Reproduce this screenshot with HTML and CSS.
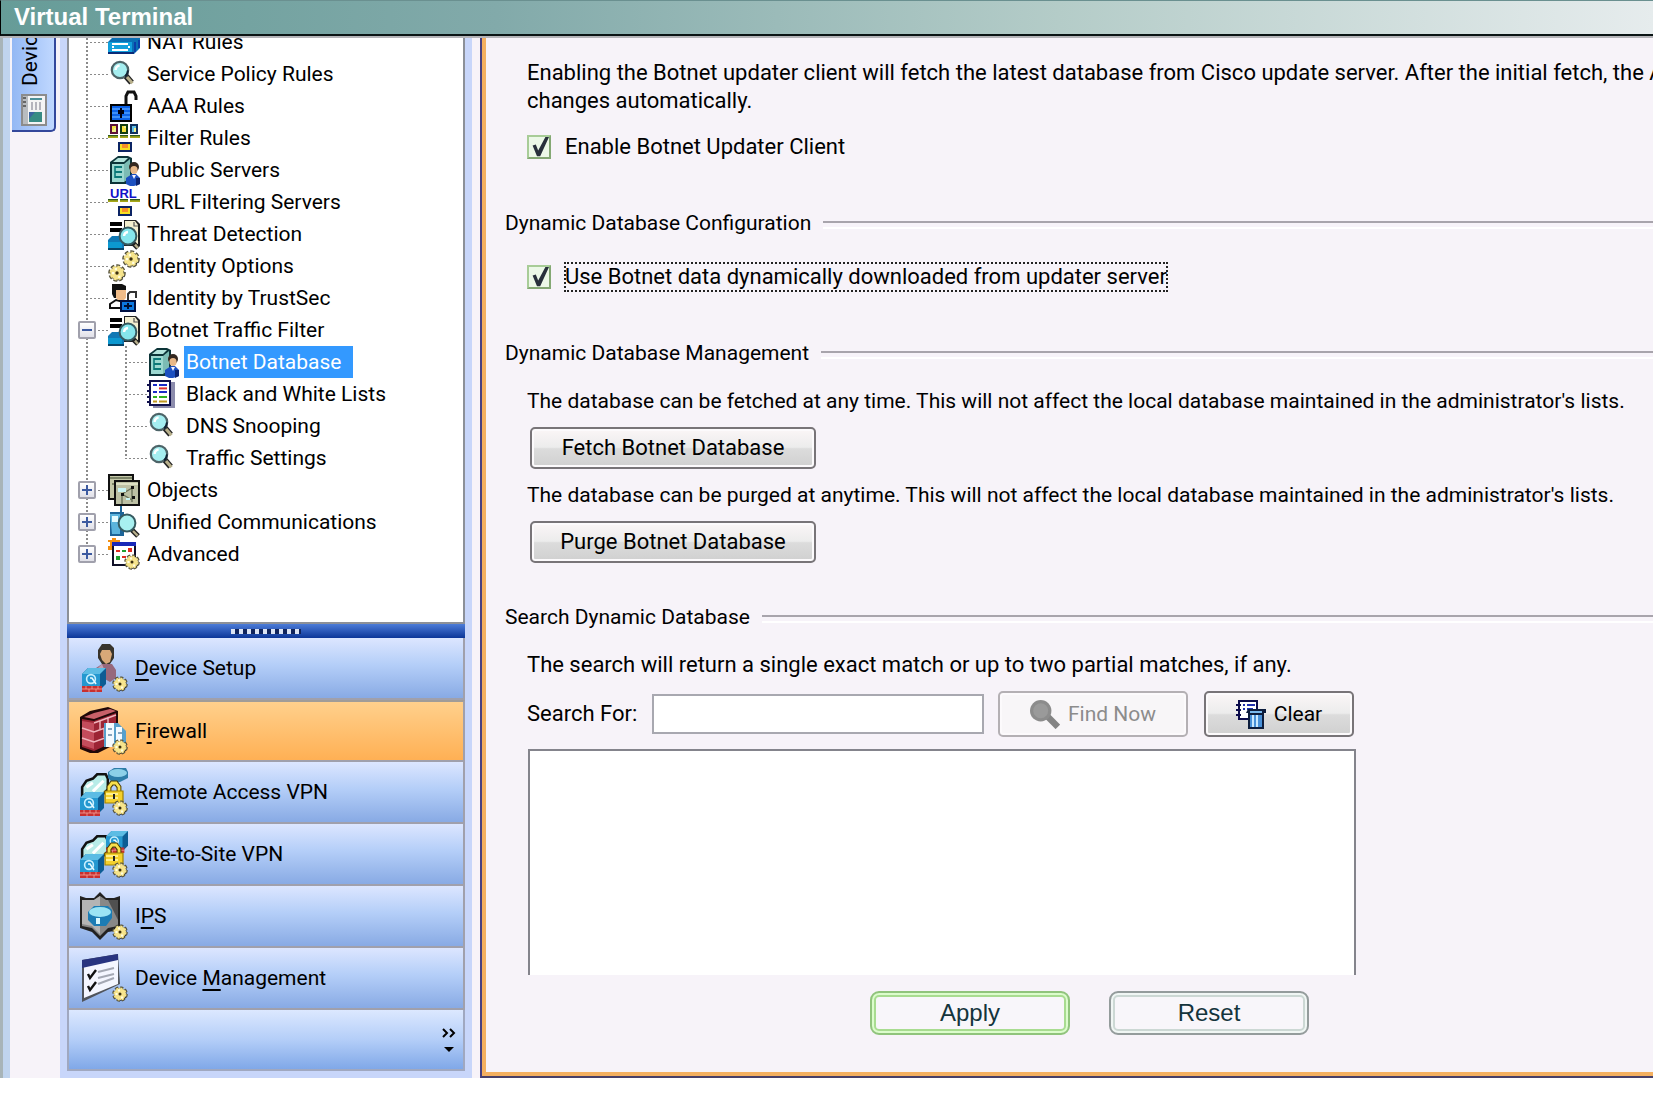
FILE: index.html
```html
<!DOCTYPE html>
<html lang="en">
<head>
    <meta charset="UTF-8">
    <meta name="viewport" content="width=device-width, initial-scale=1.0">
    <title>Virtual Terminal</title>
    <link rel="stylesheet" href="styles.css">
</head>
<body>
    <!-- Shared icon shapes -->
    <svg class="sprite" aria-hidden="true">
        <symbol id="gear" viewBox="0 0 16 16">
            <circle cx="8.500" cy="8.500" r="6.200" fill="#222"/>
            <circle cx="8" cy="8" r="6" fill="#f6e48c" stroke="#55523c" stroke-width="3.600" pathLength="16" stroke-dasharray="1.300 .7"/>
            <circle cx="8" cy="8" r="5.600" fill="#f6e48c" stroke="#f6e48c" stroke-width="2" pathLength="16" stroke-dasharray="1 1" stroke-dashoffset="-.15"/>
            <path d="M6 3.500h2v2H6zM3.500 7h2v2h-2zM9 10.500h2v2H9z" fill="#fffde0"/>
            <circle cx="8" cy="8" r="1.500" fill="#3c3010"/>
        </symbol>
        <symbol id="magnifier" viewBox="0 0 16 16">
            <path d="M8.500 8.500 11.800 12.300" stroke="#222" stroke-width="3"/>
            <path d="M9.500 9.500 12.200 12.600" stroke="#b8b08c" stroke-width="1.600"/>
            <circle cx="6" cy="6" r="4.100" fill="#a5eef0" stroke="#4d6468" stroke-width="1.100"/>
            <path d="M3.800 6a2.500 2.500 0 0 1 2-2.300" stroke="#fff" stroke-width="1.200" fill="none"/>
            <path d="M8.600 9.200a4.200 4.200 0 0 0 1.400-3" stroke="#123" fill="none"/>
        </symbol>
        <symbol id="nat" viewBox="0 0 16 16">
            <path d="M0 8 3 5h12l1 1v5l-3 3H0z" fill="#0a6fb4"/>
            <path d="M0 8h12v5H0z" fill="#12a0dc"/>
            <path d="M0 13h13v1H0z" fill="#0a2a78"/>
            <path d="M13 8h1v5h-1zM15 7h1v4h-1z" fill="#0b3fa8"/>
            <path d="M2 9h8M2 12h8" stroke="#fff"/>
            <path d="M2 10h1v1H2zM10 10h1v1h-1z" fill="#fff"/>
        </symbol>
        <symbol id="lock-open" viewBox="0 0 16 16">
            <path d="M9 7V3l1-2h3l1 2v2" stroke="#111" stroke-width="1.500" fill="none"/>
            <path d="M1 7h11v9H1z" fill="#000"/>
            <path d="M2 8h9v7H2z" fill="#0c62e8"/>
            <path d="M2 9.500h9M2 11.500h9M2 13.500h9" stroke="#4fa0ff" stroke-width=".7"/>
            <path d="M6 9h1v1h1v2h-1v2H6v-2H5v-2h1z" fill="#001"/>
        </symbol>
        <symbol id="port" viewBox="0 0 16 16">
            <path d="M0 7h5v1H0zM6 7h4v1H6zM11 7h5v1h-5z" fill="#a8a818"/>
            <path d="M0 6.800h5M6 6.800h4M11 6.800h5" stroke="#2c5a20" stroke-width=".7"/>
            <path d="M5 10h7v5H5z" fill="#0c2464"/>
            <path d="M6 11h5v3H6z" fill="#f8e020"/>
            <path d="M7 11h3v2H7z" fill="#f89028"/>
        </symbol>
        <symbol id="filter" viewBox="0 0 16 16">
            <use href="#port"/>
            <path d="M1 1h4v5H1z" fill="#5c1038"/>
            <path d="M6 1h4v5H6z" fill="#103c10"/>
            <path d="M11 1h4v5h-4z" fill="#10305c"/>
            <path d="M2 2h2v3H2zM7 2h2v3H7z" fill="#f4e040"/>
            <path d="M12 2h2v3h-2z" fill="#60c0e8"/>
            <path d="M3 3h1v2H2V4h1zM8 2h1v1H8zM13 3h1v2h-1z" fill="#f0f090"/>
        </symbol>
        <symbol id="url" viewBox="0 0 16 16">
            <use href="#port"/>
            <text x="1" y="6" font-family="Liberation Sans" font-weight="bold" font-size="6.500" fill="#1010c8">URL</text>
        </symbol>
        <symbol id="server" viewBox="0 0 16 16">
            <path d="M1 4 5 1h5l2 1v10l-3 3H1z" fill="#0c3438"/>
            <path d="M2 5h6v9H2z" fill="#9cd8d0"/>
            <path d="M2.500 4 5 2h5l-2 2z" fill="#b4e4dc"/>
            <path d="M8 5l3-2.500V12l-3 2z" fill="#7cbcb4"/>
            <path d="M3.500 6.500H7M3.500 9H7M3.500 11.500H7" stroke="#0c7878" stroke-width=".9"/>
            <path d="M3.500 6v6" stroke="#0c7878" stroke-width=".8"/>
            <circle cx="13" cy="6.500" r="2.500" fill="#342820"/>
            <ellipse cx="13" cy="8" rx="1.800" ry="2" fill="#e8b888"/>
            <path d="M9 15v-3l3-2h2l2 2v3l-3 1h-2z" fill="#1c50c0"/>
            <path d="M12 10.500h2l-1 2z" fill="#f4f4ff"/>
            <path d="M14 12h2v3l-2 1z" fill="#0c2470"/>
        </symbol>
        <symbol id="threat" viewBox="0 0 16 16">
            <path d="M1 2h6v2H1zM1 5h6v2H1z" fill="#000"/>
            <path d="M0 11 2 9h6v7H0z" fill="#1078b4"/>
            <path d="M0 12h7v3H0z" fill="#0c98d0"/>
            <path d="M0 15h8v1H0z" fill="#084468"/>
            <path d="M8 1h6l2 2v11H8z" fill="#222"/>
            <path d="M8.500 1.500h5L15 3.500V13H8.500z" fill="#f4efcf"/>
            <path d="M13 2v2h2" stroke="#555" stroke-width=".6" fill="none"/>
            <path d="M12.500 12.500 15 15" stroke="#222" stroke-width="2.600"/>
            <path d="M13.500 13.300 15 15" stroke="#b8b08c" stroke-width="1.200"/>
            <circle cx="10" cy="9" r="4.200" fill="#86e6ec" stroke="#365a60"/>
            <path d="M8 9a2.200 2.200 0 0 1 2-2" stroke="#fff" stroke-width="1.200" fill="none"/>
        </symbol>
        <symbol id="gears" viewBox="0 0 16 16">
            <use href="#gear" x="7" y="0" width="9" height="9"/>
            <use href="#gear" x="0" y="7" width="9" height="9"/>
        </symbol>
        <symbol id="trustsec" viewBox="0 0 16 16">
            <path d="M1 11l3-2 4 1v3H1z" fill="#fff" stroke="#111"/>
            <path d="M2 1h5l2 1v2H5v4H3L2 6z" fill="#111"/>
            <path d="M4 4h5v4l-1 1H5L4 8z" fill="#f0bc88"/>
            <path d="M10 9V6l1-1h3v3" stroke="#333" fill="none"/>
            <path d="M6 9h8v6H6z" fill="#001040"/>
            <path d="M7 10h6v4H7z" fill="#0c78e0"/>
            <path d="M8 12h4M10 10.500v3" stroke="#001030"/>
        </symbol>
        <symbol id="list" viewBox="0 0 16 16">
            <path d="M3 2h11v13H3z" fill="#8c8cac"/>
            <path d="M1.500 1.500h10v12h-10z" fill="#fff" stroke="#10104c"/>
            <path d="M0 3.500h2M0 6.500h2M0 9.500h2M0 12h2" stroke="#10104c"/>
            <path d="M3 3.500h2M6 3.500h4M3 7h2M6 7h4" stroke="#1c2cc8"/>
            <path d="M6 5.200h4" stroke="#e03030"/>
            <path d="M3 9.500h2M6 9.500h4" stroke="#30b020"/>
            <path d="M3 11.800h2M6 11.800h4" stroke="#c09820"/>
        </symbol>
        <symbol id="objects" viewBox="0 0 16 16">
            <path d="M.5 .5h12v12H.5z" fill="#c4c8a8" stroke="#111"/>
            <path d="M1 2h11M2 5h9" stroke="#7c8468"/>
            <path d="M3.500 3.500h12v12h-12z" fill="#bcc0a4" stroke="#111"/>
            <path d="M4 5h11" stroke="#dde0c4"/>
            <path d="M7 10 12 7M7 10l5 3M7 10v5M12 6v8" stroke="#687058" stroke-width=".7"/>
            <path d="M6.500 9.500h1.500v1.500H6.500zM11.500 6h1.500v1.500h-1.500zM12 11h1.500v1.500H12z" fill="#111"/>
            <path d="M5 7h4v2H5zM9 12h2v1H9z" fill="#c8f4f4"/>
        </symbol>
        <symbol id="phones" viewBox="0 0 16 16">
            <path d="M1 3h5V0h1v3h1v12H1z" fill="#1c6498"/>
            <path d="M1 4h5v10H2z" fill="#5cb4dc"/>
            <path d="M2 5h3v3H2z" fill="#e4fbff"/>
            <path d="M12 12 15 15" stroke="#222" stroke-width="2.600"/>
            <path d="M12.500 12.500 14.800 14.800" stroke="#b8b08c" stroke-width="1.100"/>
            <circle cx="9.500" cy="8.500" r="4.200" fill="#a8f0f0" stroke="#365a60"/>
        </symbol>
        <symbol id="advanced" viewBox="0 0 16 16">
            <path d="M0 1h2V0h2v1h2v2H4v1H2v2H0V4h1V2H0z" fill="#f49010"/>
            <path d="M2.500 2.500h11v11h-11z" fill="#fff" stroke="#101028"/>
            <path d="M2 2h12v2H2z" fill="#1828b8"/>
            <path d="M4 6h2v1H4zM7 9h2v1H7z" fill="#e02c20"/>
            <path d="M7 6h2v1H7zM4 9h2v2H4z" fill="#20a030"/>
            <path d="M10 5h2v2h-2z" fill="#e02c20"/>
            <use href="#gear" x="8" y="8" width="8" height="8"/>
        </symbol>
        <symbol id="asa" viewBox="0 0 12 12">
            <path d="M0 3 3 0h9v8l-3 3H0z" fill="#0c5c94"/>
            <path d="M0 3h9v6H0z" fill="#2498d0"/>
            <path d="M0 3 3 0h9L9 3z" fill="#5cbce4"/>
            <circle cx="4.500" cy="5.500" r="2.200" fill="none" stroke="#c8f0ff" stroke-width=".8"/>
            <path d="M4 5h1l2 3" stroke="#e8faff" stroke-width=".8" fill="none"/>
            <path d="M0 9h10v3H0z" fill="#c83030"/>
            <path d="M0 10.500h10M2 9v1.500M5 9v1.500M8 9v1.500M3.500 10.500V12M7 10.500V12" stroke="#f4a49c" stroke-width=".4"/>
        </symbol>
        <symbol id="padlock" viewBox="0 0 10 12">
            <path d="M2.500 6V3.500L4 1.500h2L7.500 3.500V6" stroke="#4c3c00" stroke-width="2.400" fill="none"/>
            <path d="M2.500 6V3.500L4 1.500h2L7.500 3.500V6" stroke="#f8e04c" stroke-width="1.400" fill="none"/>
            <path d="M.5 5.500h9v6h-9z" fill="#f4d02c" stroke="#a08000" stroke-width=".6"/>
            <path d="M1 7h6M1 9h6" stroke="#fff08c"/>
            <path d="M4.500 7h1v2.500h-1z" fill="#222"/>
        </symbol>
        <symbol id="cloud" viewBox="0 0 14 12">
            <path d="M1 11V7l2-3 3-1 2-2h4l1 2v5l-3 3z" fill="#b8ece8" stroke="#111" stroke-width="1.200"/>
            <path d="M3 7l3-2M6 9l5-5" stroke="#fff" stroke-width="1.400"/>
        </symbol>
        <symbol id="nav-setup" viewBox="0 0 24 24">
            <path d="M8 15v-3l3-2h5l2 3v4l-3 2z" fill="#96687c"/>
            <path d="M8 13l3-3 2 5-3 3z" fill="#c0a0b4"/>
            <path d="M9 3l2-3h4l2 2v5l-2 3h-4L9 7z" fill="#38342c"/>
            <path d="M11 3h4l1 2-1 4-2 1-2-2-1-3z" fill="#d8a878"/>
            <use href="#asa" x="1" y="12" width="12" height="12"/>
            <use href="#gear" x="16" y="16" width="8" height="8"/>
        </symbol>
        <symbol id="nav-firewall" viewBox="0 0 24 24">
            <path d="M0 5l5-3 9-2 5 2v16l-10 5H5l-5-2z" fill="#200808"/>
            <path d="M1 6l6 1 11-4v14L7 22l-6-2z" fill="#9c2434"/>
            <path d="M2 5l5-2 8-2 3 1L7 6z" fill="#c86068"/>
            <path d="M1 7l6 1v13l-6-2z" fill="#c44c5c"/>
            <path d="M1 10.500l6 2 11-4M1 15.500l6 2 11-4M7 8l11-4M10 7v4M14 5v4M12 11v4" stroke="#f0b4bc" stroke-width=".7" fill="none"/>
            <path d="M12 8h7l4 4v8H12z" fill="#58a0cc"/>
            <path d="M13 8h4v12h-4zM18 10h3v8h-3z" fill="#f4faff"/>
            <path d="M14 11h2M14 14h2M19 13h2" stroke="#6088a8" stroke-width=".8"/>
            <use href="#gear" x="16" y="16" width="8" height="8"/>
        </symbol>
        <symbol id="nav-remote" viewBox="0 0 24 24">
            <use href="#cloud" x="0" y="2" width="15" height="13"/>
            <path d="M14 2l3-2h6l1 2v3l-4 2h-4l-2-2z" fill="#2c7ca8"/>
            <ellipse cx="19" cy="2.500" rx="4.500" ry="2" fill="#8cd0e8"/>
            <use href="#asa" x="0" y="12" width="12" height="12"/>
            <use href="#padlock" x="12" y="6" width="10" height="12"/>
            <use href="#gear" x="16" y="16" width="8" height="8"/>
        </symbol>
        <symbol id="nav-site" viewBox="0 0 24 24">
            <use href="#cloud" x="0" y="2" width="15" height="13"/>
            <use href="#asa" x="13" y="0" width="11" height="12"/>
            <use href="#asa" x="0" y="12" width="12" height="12"/>
            <use href="#padlock" x="12" y="6" width="10" height="12"/>
            <use href="#gear" x="16" y="16" width="8" height="8"/>
        </symbol>
        <symbol id="nav-ips" viewBox="0 0 24 24">
            <path d="M0 2l3 1h4l3-3 3 3h4l3-1v17l-6 1-4 4-4-4-6-2z" fill="#222"/>
            <path d="M1 4h6l3-2 3 2h6v13l-5 1-4 4-4-4-5-1z" fill="#888"/>
            <path d="M1 4h6l3-2v19l-4-4-5-1z" fill="#b4b4b4"/>
            <path d="M14 4h5v10z" fill="#505050"/>
            <path d="M4 10l3-3h7l2 2v4l-3 4H7l-3-3z" fill="#1c7cb4"/>
            <ellipse cx="10" cy="10" rx="5.500" ry="2.500" fill="#9ce4f4"/>
            <path d="M8 13h2v3H8z" fill="#d8f8ff"/>
            <use href="#gear" x="16" y="16" width="8" height="8"/>
        </symbol>
        <symbol id="nav-management" viewBox="0 0 24 24">
            <path d="M1 3 19 0l1 15L1 24z" fill="#50545c"/>
            <path d="M2 4 19 1v14L2 22z" fill="#f4f6ff"/>
            <path d="M1 3 19 0v3L1 7z" fill="#283480"/>
            <path d="M4 10l1 2 3-4M4 16l1 2 3-4" stroke="#111" stroke-width="1.200" fill="none"/>
            <path d="M9 9l8-2M9 12l8-2M9 15l8-3" stroke="#a4a8b4"/>
            <use href="#gear" x="16" y="16" width="8" height="8"/>
        </symbol>
    </svg>

    <header class="title-bar">
        <h1>Virtual Terminal</h1>
    </header>

    <div class="workspace">
        <div class="edge"></div>
        <div class="tab-strip">
            <button class="device-tab" type="button">
                <span>Devic</span>
                <svg class="tab-icon" viewBox="0 0 26 32">
                    <path d="M1 1h24v30H1z" fill="#f4f4f4" stroke="#8c8c8c" stroke-width="2"/>
                    <path d="M2 2h5v28H2z" fill="#b8bcc0"/>
                    <path d="M2 4h3M2 8h3M2 12h3" stroke="#666" stroke-width="2"/>
                    <path d="M9 5h12" stroke="#4c9098" stroke-width="2"/>
                    <path d="M11 8v8M15 8v8M19 8v8" stroke="#b4b4bc" stroke-width="2"/>
                    <path d="M8 18h13v10H8z" fill="#388c84"/>
                    <path d="M8 18h6l-6 7z" fill="#3c64a0"/>
                </svg>
            </button>
        </div>

        <aside class="sidebar">
            <ul class="tree">
                <li class="row"><span class="branch"></span><svg class="icon"><use href="#nat"/></svg><a href="#">NAT Rules</a></li>
                <li class="row"><span class="branch"></span><svg class="icon"><use href="#magnifier"/></svg><a href="#">Service Policy Rules</a></li>
                <li class="row"><span class="branch"></span><svg class="icon"><use href="#lock-open"/></svg><a href="#">AAA Rules</a></li>
                <li class="row"><span class="branch"></span><svg class="icon"><use href="#filter"/></svg><a href="#">Filter Rules</a></li>
                <li class="row"><span class="branch"></span><svg class="icon"><use href="#server"/></svg><a href="#">Public Servers</a></li>
                <li class="row"><span class="branch"></span><svg class="icon"><use href="#url"/></svg><a href="#">URL Filtering Servers</a></li>
                <li class="row"><span class="branch"></span><svg class="icon"><use href="#threat"/></svg><a href="#">Threat Detection</a></li>
                <li class="row"><span class="branch"></span><svg class="icon"><use href="#gears"/></svg><a href="#">Identity Options</a></li>
                <li class="row"><span class="branch"></span><svg class="icon"><use href="#trustsec"/></svg><a href="#">Identity by TrustSec</a></li>
                <li class="row"><span class="branch"><button class="toggle open" type="button" aria-label="Collapse"></button></span><svg class="icon"><use href="#threat"/></svg><a href="#">Botnet Traffic Filter</a></li>
                <li class="row"><span class="branch pass"></span><span class="branch"></span><svg class="icon"><use href="#server"/></svg><a href="#" class="selected">Botnet Database</a></li>
                <li class="row"><span class="branch pass"></span><span class="branch"></span><svg class="icon"><use href="#list"/></svg><a href="#">Black and White Lists</a></li>
                <li class="row"><span class="branch pass"></span><span class="branch"></span><svg class="icon"><use href="#magnifier"/></svg><a href="#">DNS Snooping</a></li>
                <li class="row"><span class="branch pass"></span><span class="branch last"></span><svg class="icon"><use href="#magnifier"/></svg><a href="#">Traffic Settings</a></li>
                <li class="row"><span class="branch"><button class="toggle" type="button" aria-label="Expand"></button></span><svg class="icon"><use href="#objects"/></svg><a href="#">Objects</a></li>
                <li class="row"><span class="branch"><button class="toggle" type="button" aria-label="Expand"></button></span><svg class="icon"><use href="#phones"/></svg><a href="#">Unified Communications</a></li>
                <li class="row"><span class="branch last"><button class="toggle" type="button" aria-label="Expand"></button></span><svg class="icon"><use href="#advanced"/></svg><a href="#">Advanced</a></li>
            </ul>

            <div class="splitter"><div class="grip"></div></div>

            <nav class="sections">
                <a href="#" class="section"><svg class="section-icon"><use href="#nav-setup"/></svg><span><u>D</u>evice Setup</span></a>
                <a href="#" class="section active"><svg class="section-icon"><use href="#nav-firewall"/></svg><span>F<u>i</u>rewall</span></a>
                <a href="#" class="section"><svg class="section-icon"><use href="#nav-remote"/></svg><span><u>R</u>emote Access VPN</span></a>
                <a href="#" class="section"><svg class="section-icon"><use href="#nav-site"/></svg><span><u>S</u>ite-to-Site VPN</span></a>
                <a href="#" class="section"><svg class="section-icon"><use href="#nav-ips"/></svg><span>I<u>P</u>S</span></a>
                <a href="#" class="section"><svg class="section-icon"><use href="#nav-management"/></svg><span>Device <u>M</u>anagement</span></a>
            </nav>
            <div class="sections-footer">
                <button class="more" type="button" aria-label="Configure buttons">
                    <svg viewBox="0 0 14 26">
                        <path d="M1 2l4 4-4 4M8 2l4 4-4 4" stroke="#000" stroke-width="2" fill="none"/>
                        <path d="M2 20h10l-5 5z" fill="#000"/>
                    </svg>
                </button>
            </div>
        </aside>

        <main class="panel">
            <section class="group">
                <p>Enabling the Botnet updater client will fetch the latest database from Cisco update server. After the initial fetch, the A<br>changes automatically.</p>
                <div class="check">
                    <input type="checkbox" id="enable-client" checked>
                    <label for="enable-client">Enable Botnet Updater Client</label>
                </div>
            </section>

            <section class="group">
                <h2>Dynamic Database Configuration</h2>
                <div class="check">
                    <input type="checkbox" id="use-data" checked>
                    <label for="use-data" class="focused">Use Botnet data dynamically downloaded from updater server</label>
                </div>
            </section>

            <section class="group">
                <h2>Dynamic Database Management</h2>
                <p class="note">The database can be fetched at any time. This will not affect the local database maintained in the administrator's lists.</p>
                <button class="btn btn-wide" type="button">Fetch Botnet Database</button>
                <p class="note">The database can be purged at anytime. This will not affect the local database maintained in the administrator's lists.</p>
                <button class="btn btn-wide" type="button">Purge Botnet Database</button>
            </section>

            <section class="group">
                <h2>Search Dynamic Database</h2>
                <p>The search will return a single exact match or up to two partial matches, if any.</p>
                <div class="search">
                    <label for="search-for">Search For:</label>
                    <input type="text" id="search-for">
                    <button class="btn btn-find" type="button" disabled>
                        <svg viewBox="0 0 28 28">
                            <path d="M15 15 26 26" stroke="#848484" stroke-width="6"/>
                            <circle cx="10" cy="11" r="10" fill="#8c8c8c"/>
                            <circle cx="10" cy="11" r="7" fill="#9a9a9a"/>
                        </svg>
                        Find Now
                    </button>
                    <button class="btn btn-clear" type="button">
                        <svg viewBox="0 0 30 30">
                            <path d="M3 2h18v18H3z" fill="#fff" stroke="#0c0c4c" stroke-width="2"/>
                            <path d="M0 6h5M0 11h5M0 16h5" stroke="#0c0c4c" stroke-width="2"/>
                            <path d="M7 6h2M11 6h8M7 10h2M11 10h6" stroke="#2030b0" stroke-width="2"/>
                            <path d="M12 10h18v4h-2v16H12V14h-2z" fill="#0c1c3c"/>
                            <path d="M14 12h12v2H14z" fill="#78b8ec"/>
                            <path d="M14 16h12v12H14z" fill="#4890d8"/>
                            <path d="M17 16v12M21 16v12" stroke="#c8e8ff" stroke-width="2"/>
                        </svg>
                        Clear
                    </button>
                </div>
                <div class="results"></div>
            </section>

            <div class="actions">
                <button class="pill apply" type="button">Apply</button>
                <button class="pill" type="button">Reset</button>
            </div>
        </main>
    </div>
</body>
</html>
```
FILE: styles.css
```css
* {
    margin: 0;
    padding: 0;
    box-sizing: border-box;
}

body {
    font-family: Tahoma, 'Roboto', sans-serif;
    font-size: 21px;
    line-height: 28px;
    color: #000;
    background: #fff;
    min-height: 100vh;
    display: flex;
    flex-direction: column;
    overflow: hidden;
}

a {
    color: inherit;
    text-decoration: none;
}

ul {
    list-style: none;
}

button, input {
    font: inherit;
    color: inherit;
}

.sprite {
    display: none;
}

.title-bar {
    height: 36px;
    padding-left: 13px;
    border-left: 1px solid #000;
    border-top: 1px solid #6a9090;
    border-bottom: 2px solid #0a1414;
    background: linear-gradient(to right, #669c98, #82aaaa 30%, #b4ccc8 64%, #e6eced);
}

.title-bar h1 {
    font-family: 'Liberation Sans', Arial, sans-serif;
    font-size: 24px;
    line-height: 32px;
    color: #fff;
}

.workspace {
    flex: 1;
    display: flex;
    margin-bottom: 16px;
    border-top: 2px solid #b4b4b8;
    background: #f7f3f9;
}

/* Left tab strip */
.edge {
    width: 10px;
    border-left: 3px solid #a8b4b8;
    background: #c0d4ee;
}

.tab-strip {
    width: 50px;
    padding-left: 2px;
}

.device-tab {
    width: 44px;
    height: 94px;
    padding: 0 0 4px 2px;
    border: 0 solid #34489c;
    border-width: 0 2px 2px 0;
    border-radius: 0 0 5px 0;
    background: linear-gradient(to right, #94b8f4, #c0d8ff);
    display: flex;
    flex-direction: column;
    align-items: center;
    justify-content: flex-end;
    gap: 8px;
    overflow: hidden;
}

.device-tab span {
    margin-right: 8px;
    writing-mode: vertical-rl;
    transform: rotate(180deg);
}

.tab-icon {
    width: 26px;
    height: 32px;
    flex: none;
}

/* Sidebar */
.sidebar {
    width: 412px;
    padding: 0 7px 7px;
    background: #c8d6fa;
    display: flex;
    flex-direction: column;
}

.tree {
    flex: 1;
    border: 2px solid #8c9098;
    border-top: 0;
    background: #fff;
    overflow: hidden;
}

.row {
    display: flex;
    align-items: center;
    height: 32px;
}

.row:first-child {
    margin-top: -12px;
}

.branch {
    --line: #8a8a8a;
    width: 39px;
    height: 32px;
    padding-left: 9px;
    display: flex;
    align-items: center;
    background:
        repeating-linear-gradient(to bottom, var(--line) 0 2px, transparent 2px 4px) 17px 0 / 2px 100% no-repeat,
        repeating-linear-gradient(to right, var(--line) 0 2px, transparent 2px 4px) 17px 16px / 22px 1px no-repeat;
}

.branch.pass {
    background: repeating-linear-gradient(to bottom, var(--line) 0 2px, transparent 2px 4px) 17px 0 / 2px 100% no-repeat;
}

.branch.last {
    background:
        repeating-linear-gradient(to bottom, var(--line) 0 2px, transparent 2px 4px) 17px 0 / 2px 50% no-repeat,
        repeating-linear-gradient(to right, var(--line) 0 2px, transparent 2px 4px) 17px 16px / 22px 1px no-repeat;
}

.toggle {
    width: 18px;
    height: 18px;
    border: 2px solid #a0a0ac;
    border-radius: 2px;
    background:
        linear-gradient(#3c5aa0, #3c5aa0) center / 10px 2px no-repeat,
        linear-gradient(#3c5aa0, #3c5aa0) center / 2px 10px no-repeat,
        linear-gradient(#fff, #e0e0e8);
}

.toggle.open {
    background:
        linear-gradient(#3c5aa0, #3c5aa0) center / 10px 2px no-repeat,
        linear-gradient(#fff, #e0e0e8);
}

.icon {
    width: 32px;
    height: 32px;
    margin-right: 5px;
}

.row a {
    padding: 0 2px;
    line-height: 32px;
}

.row a.selected {
    padding-right: 12px;
    color: #fff;
    background: #3399ff;
}

.splitter {
    height: 14px;
    display: flex;
    align-items: center;
    justify-content: center;
    background: linear-gradient(#4c7cd8, #0c3698);
}

.grip {
    width: 70px;
    height: 5px;
    background: repeating-linear-gradient(to right, #dce4f4 0 4px, #10245c 4px 8px);
}

.section {
    display: flex;
    align-items: center;
    gap: 7px;
    height: 62px;
    padding-left: 11px;
    border: 2px solid #a0a0ac;
    border-top: 0;
    background: linear-gradient(#dce6ff, #b4cef8 45%, #88aae4);
}

.section.active {
    border-top: 2px solid #a09c98;
    background: linear-gradient(#ffd08c, #ffb054);
}

.section u {
    text-underline-offset: 4px;
    text-decoration-thickness: 2px;
}

.section-icon {
    width: 48px;
    height: 48px;
}

.sections-footer {
    height: 61px;
    padding-right: 7px;
    border: 2px solid #a0a8c0;
    border-top: 0;
    background: linear-gradient(#dce8ff, #b4cef8 50%, #80a8e8);
    display: flex;
    align-items: center;
    justify-content: flex-end;
}

.more {
    width: 14px;
    height: 26px;
    border: 0;
    background: none;
}

.more svg {
    display: block;
}

/* Main panel */
.panel {
    flex: 1;
    min-width: 0;
    margin-left: 8px;
    padding: 21px 0 0 19px;
    border-left: 2px solid #484080;
    border-bottom: 2px solid #484068;
    box-shadow: inset 4px 0 #f4b060, inset 0 -4px #f4b060;
    font-size: 22px;
    overflow: hidden;
    white-space: nowrap;
}

.group {
    margin-bottom: 40px;
    padding-left: 26px;
}

.group h2 {
    display: flex;
    align-items: center;
    gap: 12px;
    margin: 0 0 20px -22px;
    font-size: 21px;
    font-weight: normal;
}

.group h2::after {
    content: '';
    flex: 1;
    height: 4px;
    margin-top: 4px;
    border-top: 2px solid #a8a4ac;
    border-bottom: 2px solid #fff;
}

.group .note {
    font-size: 21px;
}

.check {
    display: flex;
    align-items: center;
    gap: 14px;
    margin-bottom: 48px;
}

.check input {
    appearance: none;
    width: 24px;
    height: 24px;
    border: 2px solid #a8cc98;
    border-right-color: #84a874;
    border-bottom-color: #84a874;
    background: #ecf8e8;
}

.check input:checked::after {
    content: '';
    display: block;
    width: 20px;
    height: 20px;
    background: #28303c;
    clip-path: polygon(18% 42%, 34% 38%, 46% 68%, 82% 0, 100% 0, 56% 96%, 40% 96%);
}

.check .focused {
    outline: 2px dotted #222;
    outline-offset: -1px;
}

p + .check {
    margin-top: 18px;
}

h2 + .check {
    margin-top: 26px;
}

.btn {
    display: flex;
    align-items: center;
    justify-content: center;
    gap: 8px;
    border: 2px solid #787478;
    border-radius: 5px;
    background: linear-gradient(#fbf6f7, #ececec 48%, #dcdcdc 52%, #d0d0d0);
    box-shadow: inset 0 0 0 2px #fcfafc;
}

.btn:disabled {
    color: #8c8c8c;
    border-color: #b4b0b4;
    background: #f8f6f8;
}

.btn-wide {
    width: 286px;
    height: 42px;
    margin: 12px 0 12px 3px;
}

.search {
    display: flex;
    align-items: center;
    width: 827px;
    margin-top: 12px;
}

.search input {
    width: 332px;
    height: 40px;
    margin: 0 14px 0 auto;
    padding: 0 8px;
    border: 2px solid #a8a8b0;
    background: #fff;
}

.search .btn {
    height: 46px;
    font-size: 21px;
}

.btn-find {
    width: 190px;
    margin-right: 16px;
}

.btn-clear {
    width: 150px;
}

.btn svg {
    width: 30px;
    height: 30px;
}

.results {
    width: 828px;
    height: 226px;
    margin: 12px 0 0 1px;
    border: 2px solid #84848c;
    border-bottom: 0;
    background: #fff;
}

.actions {
    display: flex;
    gap: 39px;
    margin: -24px 0 0 369px;
}

.pill {
    width: 200px;
    height: 44px;
    font-family: 'Liberation Sans', Arial, sans-serif;
    font-size: 24px;
    color: #14343c;
    border: 2px solid #949c9c;
    border-radius: 9px;
    background: #f8f6fa;
    box-shadow: inset 0 0 0 2px #f0f6f4, inset 0 0 0 4px #ccd8d4;
}

.pill.apply {
    border-color: #90c47c;
    box-shadow: inset 0 0 0 2px #dcfccc, inset 0 0 0 4px #a8dc90;
}
```
